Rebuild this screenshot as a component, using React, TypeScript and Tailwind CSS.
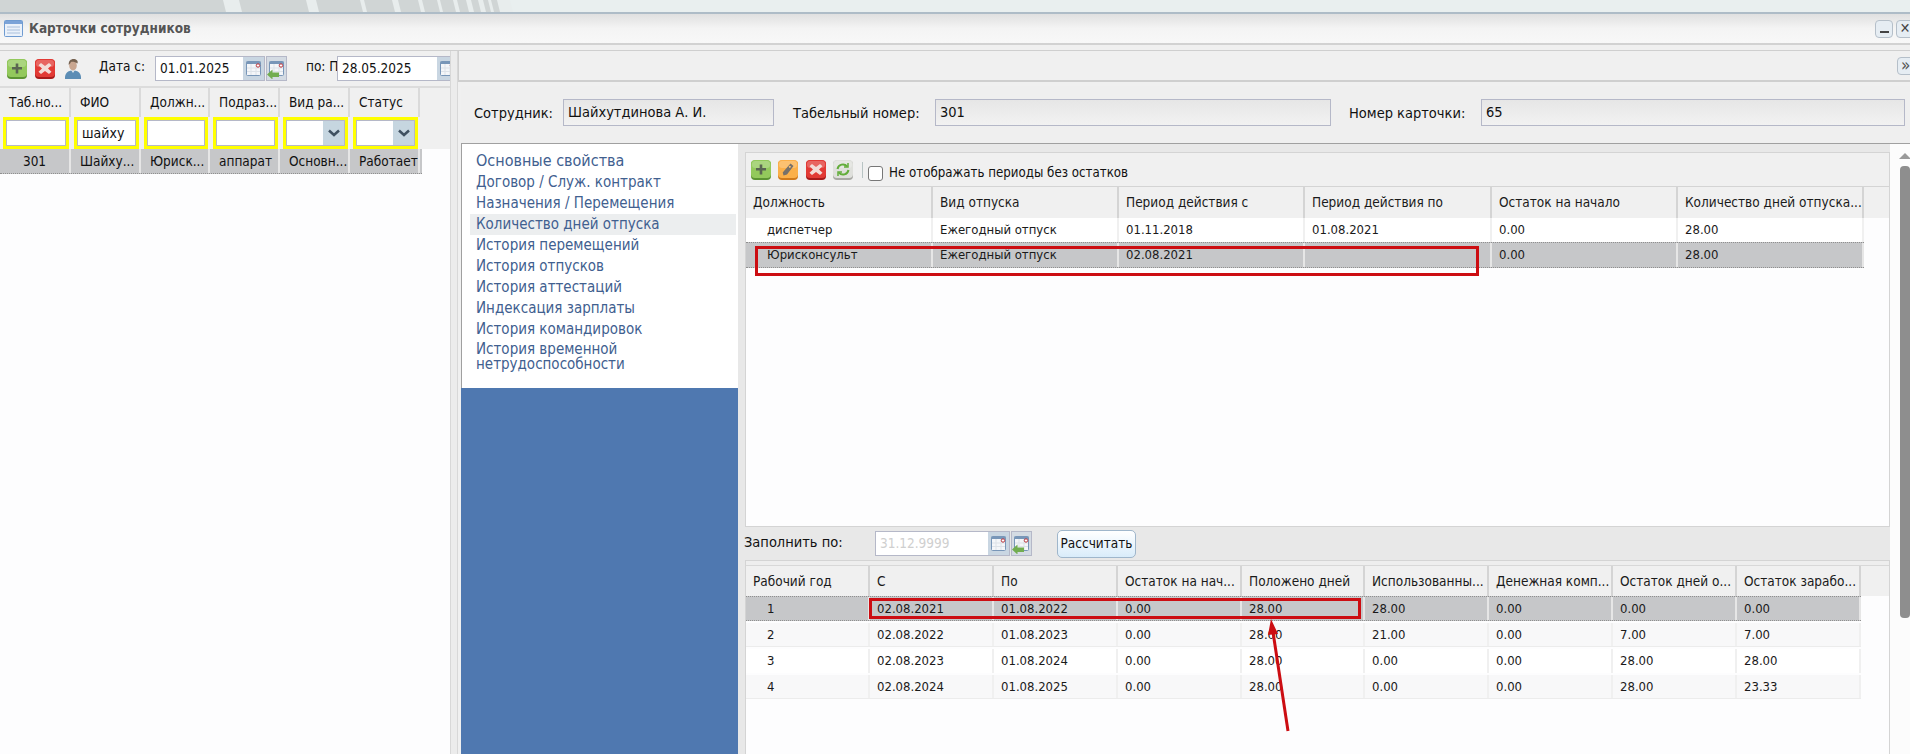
import type { ReactNode } from "react";

const FONT = "font-['DejaVu_Sans_Condensed','DejaVu_Sans',sans-serif]";

const STRIPES = [
  [223, 239], [306, 316], [360, 364], [392, 398], [418, 422], [437, 440],
  [453, 457], [466, 471], [478, 483], [488, 491], [497, 510],
];

const NAV = [
  "Договор / Служ. контракт",
  "Назначения / Перемещения",
  "Количество дней отпуска",
  "История перемещений",
  "История отпусков",
  "История аттестаций",
  "Индексация зарплаты",
  "История командировок",
];

const LEFT_COLS = "grid grid-cols-[71px_70px_69px_70px_70px_70px]";
const UPPER_COLS = "grid grid-cols-[187px_186px_186px_187px_186px_186px] w-[1118px]";
const LOWER_COLS = "grid grid-cols-[124px_124px_124px_124px_123px_124px_124px_124px_124px] w-[1115px]";

const UPPER_HEAD = ["Должность", "Вид отпуска", "Период действия с", "Период действия по", "Остаток на начало", "Количество дней отпуска..."];
const UPPER_ROWS = [
  ["диспетчер", "Ежегодный отпуск", "01.11.2018", "01.08.2021", "0.00", "28.00"],
  ["Юрисконсульт", "Ежегодный отпуск", "02.08.2021", "", "0.00", "28.00"],
];

const LOWER_HEAD = ["Рабочий год", "С", "По", "Остаток на нач...", "Положено дней", "Использованны...", "Денежная комп...", "Остаток дней о...", "Остаток зарабо..."];
const LOWER_ROWS = [
  ["1", "02.08.2021", "01.08.2022", "0.00", "28.00", "28.00", "0.00", "0.00", "0.00"],
  ["2", "02.08.2022", "01.08.2023", "0.00", "28.00", "21.00", "0.00", "7.00", "7.00"],
  ["3", "02.08.2023", "01.08.2024", "0.00", "28.00", "0.00", "0.00", "28.00", "28.00"],
  ["4", "02.08.2024", "01.08.2025", "0.00", "28.00", "0.00", "0.00", "28.00", "23.33"],
];

function ToolIcon({ kind }: { kind: "add" | "del" | "edit" | "refresh" }) {
  const fill = { add: "#93c95c", del: "#e23a35", edit: "#fbb04a", refresh: "#dfe0dc" }[kind];
  const lip = { add: "#5c9433", del: "#a81a1a", edit: "#d07a1c", refresh: "#a8a8a4" }[kind];
  return (
    <svg width="20" height="20" viewBox="0 0 20 20" className="flex-none">
      <rect x="0" y="0.5" width="20" height="19.5" rx="4" fill={lip} />
      <rect x="0" y="0" width="20" height="18" rx="4" fill={fill} />
      <rect x="1" y="1" width="18" height="7" rx="3" fill="#fff" opacity="0.22" />
      {kind === "add" && <path d="M8.7 4.500h2.600v3.500h3.700v2.600h-3.700v3.900H8.700v-3.900H5V8h3.700z" fill="#5a6652" />}
      {kind === "del" && <path d="M6 4l4 3 4-3 2.500 2.200L13 9.500l3.500 3.300L14 15l-4-3-4 3-2.500-2.200L7 9.500 3.500 6.200z" fill="#f3dcd8" />}
      {kind === "edit" && <path d="M12.500 3.500l3 2.500-6.500 8.500-3.500 1-.8-3zM11.800 5.800a1 1 0 1 0 .01 0z" fill="#77716a" />}
      {kind === "refresh" && (
        <g fill="none" stroke="#62ad3a" strokeWidth="2">
          <path d="M4.500 9a5.500 5.500 0 0 1 9.600-2.600" />
          <path d="M15.500 10a5.500 5.500 0 0 1-9.600 2.600" />
          <path d="M15 3v4h-4M5 16v-4h4" strokeWidth="1.500" />
        </g>
      )}
    </svg>
  );
}

function PersonIcon() {
  return (
    <svg width="18" height="20" viewBox="0 0 18 20" className="flex-none">
      <path d="M1 20c-.5-6 3-8.500 8-8.500s8.500 2.500 8 8.500z" fill="#5c8db5" />
      <path d="M7 11l2 3 2-3z" fill="#dfe8ee" />
      <ellipse cx="9" cy="6.500" rx="3.800" ry="5" fill="#c9a690" />
      <path d="M4.800 6c-.5-4 2-6 4.700-6s5 1.500 4 4.500c-2-1.500-5-2-6.500-1.500-.5 1-1.200 2-2.200 3z" fill="#75614f" />
    </svg>
  );
}

function CalendarIcon({ back }: { back?: boolean }) {
  return (
    <svg width="19" height="20" viewBox="0 0 19 20" className="flex-none">
      <rect x="2.500" y="2.500" width="14" height="14" rx="1" fill="#f4f6f9" stroke="#7896b8" />
      <rect x="2.500" y="2.500" width="14" height="2.500" fill="#7896b8" />
      <path d="M3 9h13M3 12.500h13M7 5v11M12 5v11" stroke="#dde2e8" />
      <circle cx="14" cy="6.500" r="1.700" fill="#fff" stroke="#b8323a" />
      {back && <path d="M0 15.500l5.500-5v3h6.500v4.500H5.500v2.500z" fill="#72ad50" />}
    </svg>
  );
}

function DateBox({ value, muted, width }: { value: string; muted?: boolean; width: string }) {
  return (
    <div className={`flex h-[25px] flex-none items-center border border-[#b5b8c8] bg-white ${width}`}>
      <span className={`flex-1 pl-[4px] text-[13.5px] ${muted ? "text-[#cfcfcf]" : "text-[#111]"}`}>{value}</span>
      <span className="flex h-full w-[21px] items-center justify-center bg-[#c9d6e2]">
        <CalendarIcon />
      </span>
    </div>
  );
}

function BackButton() {
  return (
    <span className="ml-[1px] flex h-[25px] w-[21px] flex-none items-center justify-center border border-[#b5b8c8] bg-[#d4dbe3]">
      <CalendarIcon back />
    </span>
  );
}

function FilterBox({ value, combo }: { value?: string; combo?: boolean }) {
  return (
    <div className="ml-[3px] mr-[2px] flex h-[32px] border-[3px] border-[#ffff00] bg-white">
      <div className="flex flex-1 items-center overflow-hidden border border-[#b5b8c8] bg-white pl-[4px] text-[14px]">
        <span className="flex-1">{value}</span>
        {combo && (
          <span className="-mr-px flex h-full w-[22px] flex-none items-center justify-center bg-[#c6d6e0]">
            <svg width="12" height="8" viewBox="0 0 12 8">
              <path d="M1 1.500l5 4.500 5-4.500" fill="none" stroke="#3f5160" strokeWidth="2.500" />
            </svg>
          </span>
        )}
      </div>
    </div>
  );
}

function ReadField({ value, width }: { value: string; width: string }) {
  return (
    <div className={`flex h-[27px] flex-none items-center border border-[#b5b8c8] bg-gradient-to-b from-[#e6e6e6] to-[#f2f2f2] pl-[4px] pt-[1px] text-[14.5px] ${width}`}>
      {value}
    </div>
  );
}

function HeadCell({ children }: { children: ReactNode }) {
  return <div className="truncate border-r-2 border-[#d4d4d4] pl-[7px]">{children}</div>;
}

function DataGrid({ cols, head, rows, selected, headH, rowClass }: {
  cols: string;
  head: string[];
  rows: string[][];
  selected: number;
  headH: string;
  rowClass: (i: number) => string;
}) {
  return (
    <div className="text-[13px] text-[#1a1a1a]">
      <div className={`bg-[#f0f0f0] text-[13.5px] ${headH}`}>
        <div className={`${cols} h-full items-stretch [&>div]:flex [&>div]:items-center`}>
          {head.map((h) => (
            <HeadCell key={h}>{h}</HeadCell>
          ))}
        </div>
      </div>
      {rows.map((row, i) => (
        <div
          key={i}
          className={`${cols} items-stretch ${rowClass(i)} ${i === selected ? "border-y border-dotted border-[#8f8f8f] bg-[#c6c7c9]" : ""}`}
        >
          {row.map((c, j) => (
            <div key={j} className={`flex items-center truncate border-r-2 ${j === 0 ? "pl-[21px]" : "pl-[7px]"} ${i === selected ? "border-[#e6e6e6]" : "border-[#f0f0f0]"}`}>
              {c}
            </div>
          ))}
        </div>
      ))}
    </div>
  );
}

export default function App() {
  return (
    <div className={`relative flex h-[754px] w-[1910px] flex-col overflow-hidden bg-[#f0f0f0] text-[#111] ${FONT}`}>
      <svg width="1910" height="12" className="block flex-none">
        <rect width="1910" height="12" fill="#e9efef" />
        <rect width="510" height="12" fill="#d0d5d5" />
        {STRIPES.map(([a, b]) => (
          <polygon key={a} points={`${a},0 ${b},0 ${b + 3},12 ${a + 3},12`} fill="#e8eded" />
        ))}
      </svg>
      <div className="h-[2px] flex-none bg-[#aebcc7]" />

      {/* window title */}
      <div className="flex h-[31px] flex-none items-center border-b-2 border-[#d2d2d2] bg-gradient-to-b from-[#e0e0e0] via-[#f4f4f4] to-[#f8f8f8] pl-[4px]">
        <svg width="19" height="17" viewBox="0 0 19 17" className="flex-none">
          <rect x="0.500" y="0.500" width="18" height="16" rx="1" fill="#eaf1fa" stroke="#6f9bd1" />
          <rect x="1" y="1" width="17" height="3" fill="#7ba3d8" />
          <path d="M3 7h13M3 10h13M3 13h13" stroke="#aac0dc" />
        </svg>
        <span className="ml-[6px] text-[13.5px] font-bold text-[#555]">Карточки сотрудников</span>
        <div className="ml-auto flex items-center gap-[3px]">
          <span className="flex h-[18px] w-[18px] items-center justify-center rounded-[4px] border border-[#b5bfc9] bg-[#e6edf3]">
            <span className="mt-[6px] h-[2px] w-[9px] bg-[#444]" />
          </span>
          <span className="-mr-[4px] flex h-[18px] w-[18px] items-center justify-center rounded-[4px] border border-[#b5bfc9] bg-[#e6edf3] text-[14px] text-[#444]">✕</span>
        </div>
      </div>
      <div className="h-[5px] flex-none bg-[#f0f0f0]" />

      <div className="flex min-h-0 flex-1 border-t border-[#cfcfcf]">
        {/* employees list */}
        <div className="flex w-[450px] flex-none flex-col overflow-hidden bg-[#fdfdfe]">
          <div className="flex h-[37px] flex-none items-center border-b-2 border-[#dcdcdc] bg-[#f0f0f0] pl-[7px]">
            <ToolIcon kind="add" />
            <span className="ml-[8px]"><ToolIcon kind="del" /></span>
            <span className="ml-[9px]"><PersonIcon /></span>
            <span className="-mt-[5px] ml-[17px] w-[56px] flex-none text-[13.5px]">Дата с:</span>
            <DateBox value="01.01.2025" width="w-[110px]" />
            <BackButton />
            <span className="-mt-[5px] ml-[19px] w-[31px] flex-none overflow-hidden whitespace-nowrap text-[13.5px]">по: П</span>
            <DateBox value="28.05.2025" width="w-[122px]" />
          </div>
          <div className="h-[61px] flex-none bg-[#f0f0f0] text-[13.5px]">
            <div className={`${LEFT_COLS} h-[29px] w-[420px] [&>div]:flex [&>div]:items-center`}>
              {["Таб.но...", "ФИО", "Должн...", "Подраз...", "Вид ра...", "Статус"].map((h) => (
                <div key={h} className="border-r-2 border-[#dadada] pl-[9px]">{h}</div>
              ))}
            </div>
            <div className={`${LEFT_COLS} w-[420px]`}>
              <FilterBox />
              <FilterBox value="шайху" />
              <FilterBox />
              <FilterBox />
              <FilterBox combo />
              <FilterBox combo />
            </div>
          </div>
          <div className={`${LEFT_COLS} h-[25px] w-[422px] flex-none border-b border-dotted border-[#8f8f8f] bg-[#c6c7c9] text-[13.5px]`}>
            {["301", "Шайху...", "Юриск...", "аппарат", "Основн...", "Работает"].map((c, i) => (
              <div key={c} className={`flex items-center truncate border-r-2 border-[#e6e6e6] ${i === 0 ? "justify-center" : "pl-[9px]"}`}>{c}</div>
            ))}
          </div>
        </div>

        <div className="w-[8px] flex-none border-x border-[#d8d8d8] bg-[#ececec]" />

        {/* employee card */}
        <div className="flex min-w-0 flex-1 flex-col">
          <div className="flex h-[31px] flex-none items-center justify-end border-b-2 border-l border-[#cfcfcf] bg-[#f0f0f0]">
            <span className="-mr-[5px] flex h-[18px] w-[18px] items-center justify-start rounded-[4px] border border-[#b5bfc9] bg-[#e6edf3] pl-[3px] text-[17px] leading-none text-[#555]">»</span>
          </div>
          <div className="flex min-h-0 flex-1 flex-col pl-[3px] pt-[4px]">
            <div className="flex h-[57px] flex-none items-start bg-[#efefef] pt-[13px] text-[14.5px]">
              <span className="ml-[13px] w-[89px] flex-none pt-[1px] leading-[27px]">Сотрудник:</span>
              <ReadField value="Шайхутдинова А. И." width="w-[211px]" />
              <span className="ml-[19px] w-[142px] flex-none pt-[1px] leading-[27px]">Табельный номер:</span>
              <ReadField value="301" width="w-[396px]" />
              <span className="ml-[18px] w-[132px] flex-none pt-[1px] leading-[27px]">Номер карточки:</span>
              <ReadField value="65" width="w-[424px]" />
            </div>
            <div className="flex min-h-0 flex-1 border-t border-[#a0a0a0]">
              <nav className="flex w-[277px] flex-none flex-col bg-[#4f78b0]">
                <div className="h-[244px] flex-none border-l border-[#a0a0a0] bg-white pt-[6px] text-[15px] leading-[21px] text-[#41608f]">
                  <div className="mb-[1px] pl-[14px] text-[16px]">Основные свойства</div>
                  {NAV.map((n) => (
                    <div key={n} className={`ml-[8px] mr-[2px] pl-[6px] ${n === "Количество дней отпуска" ? "bg-[#eceeef]" : ""}`}>{n}</div>
                  ))}
                  <div className="ml-[8px] pl-[6px] pt-[2px] leading-[15px]">История временной нетрудоспособности</div>
                </div>
              </nav>

              <div className="flex min-w-0 flex-1 bg-[#e8e8e8]">
                <div className="flex min-w-0 flex-1 flex-col pl-[7px] pt-[8px]">
                  {/* leave periods */}
                  <div className="flex h-[375px] flex-none flex-col border border-[#d4d4d4] bg-[#fdfdfe]">
                    <div className="flex h-[34px] flex-none items-center border-b border-[#d4d4d4] bg-[#f0f0f0] pl-[5px]">
                      <ToolIcon kind="add" />
                      <span className="ml-[7px]"><ToolIcon kind="edit" /></span>
                      <span className="ml-[8px]"><ToolIcon kind="del" /></span>
                      <span className="ml-[7px]"><ToolIcon kind="refresh" /></span>
                      <span className="ml-[9px] h-[16px] w-px bg-[#b8c4c4]" />
                      <span className="ml-[5px] mt-[7px] h-[15px] w-[15px] rounded-[3px] border border-[#777] bg-white" />
                      <span className="ml-[6px] mt-[7px] text-[13.200px]">Не отображать периоды без остатков</span>
                    </div>
                    <DataGrid
                      cols={UPPER_COLS}
                      head={UPPER_HEAD}
                      rows={UPPER_ROWS}
                      selected={1}
                      headH="h-[31px]"
                      rowClass={(i) => (i === 1 ? "h-[26px]" : "h-[24px] bg-white")}
                    />
                  </div>

                  {/* fill bar */}
                  <div className="flex h-[33px] flex-none items-center text-[14px]">
                    <span className="-ml-[1px] -mt-[1px] w-[131px] flex-none text-[14.5px]">Заполнить по:</span>
                    <DateBox value="31.12.9999" muted width="w-[135px]" />
                    <BackButton />
                    <span className="ml-[25px] flex h-[28px] w-[79px] items-center justify-center rounded-[5px] border border-[#9fb6cb] bg-gradient-to-b from-white to-[#d9ecfa] text-[13.5px]">Рассчитать</span>
                  </div>

                  {/* working years */}
                  <div className="flex min-h-0 flex-1 flex-col border-l border-r border-t border-[#d4d4d4] bg-[#fdfdfe]">
                    <div className="h-[5px] flex-none border-b border-[#d8d8d8] bg-[#eeeeee]" />
                    <DataGrid
                      cols={LOWER_COLS}
                      head={LOWER_HEAD}
                      rows={LOWER_ROWS}
                      selected={0}
                      headH="h-[30px]"
                      rowClass={(i) => (i === 0 ? "mb-[2px] h-[25px]" : i === 2 ? "mb-[2px] h-[24px] bg-white" : "mb-[2px] h-[24px] border-b border-[#ececec] bg-[#f8f8f9]")}
                    />
                  </div>
                </div>

                <div className="w-[20px] flex-none bg-[#fcfcfc]">
                  <div className="ml-[9px] mt-[9px] h-0 w-0 border-x-[6px] border-b-[6px] border-x-transparent border-b-[#9a9a9a]" />
                  <div className="ml-[10px] mt-[7px] h-[452px] rounded-[4px] bg-[#8e8e8e]" />
                </div>
              </div>
            </div>
          </div>
        </div>
      </div>

      {/* annotations over the screen */}
      <div className="absolute left-[755px] top-[246px] h-[30px] w-[724px] border-[3px] border-[#cc0d12]" />
      <div className="absolute left-[869px] top-[598px] h-[21px] w-[492px] border-[3px] border-[#cc0d12]" />
      <svg width="40" height="130" viewBox="1260 610 40 130" className="absolute left-[1260px] top-[610px]">
        <path d="M1288 731L1273 632" stroke="#cc0d12" strokeWidth="3" fill="none" />
        <path d="M1271 619l7 15-10 1z" fill="#cc0d12" />
      </svg>
    </div>
  );
}
